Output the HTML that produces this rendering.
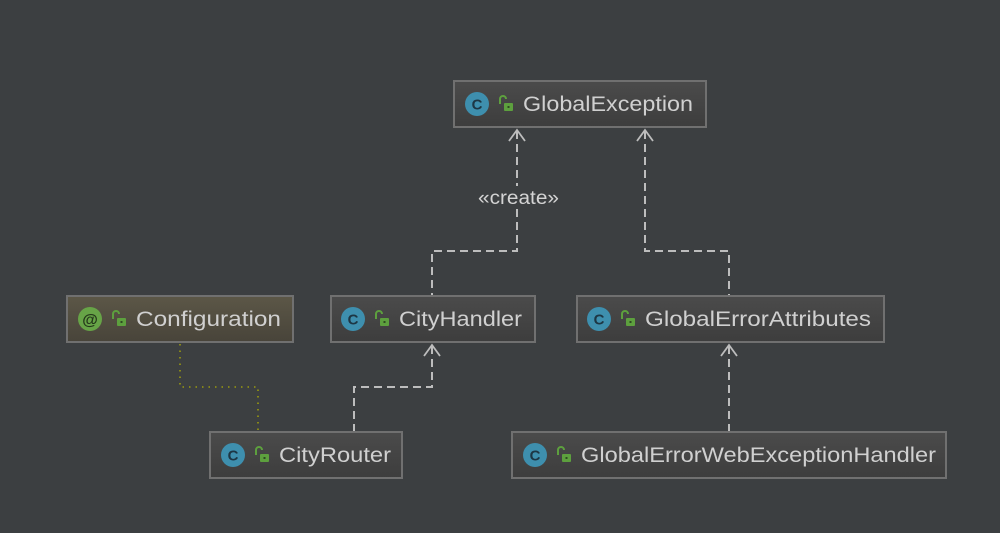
<!DOCTYPE html><html><head><style>body{margin:0;background:#3c3f41;}svg{display:block}text{font-family:"Liberation Sans",sans-serif;}</style></head><body>
<svg width="1000" height="533" viewBox="0 0 1000 533">
<defs>
<linearGradient id="g" x1="0" y1="0" x2="0" y2="1"><stop offset="0" stop-color="#4b4b4b"/><stop offset="1" stop-color="#3d3d3d"/></linearGradient>
<linearGradient id="y" x1="0" y1="0" x2="0" y2="1"><stop offset="0" stop-color="#5c5747"/><stop offset="1" stop-color="#48443a"/></linearGradient>
<g id="lock"><path d="M-5 0 v-5 a3 3 0 0 1 6 0" fill="none" stroke="#5da03e" stroke-width="2"/><rect x="-1" y="-1" width="9" height="8" rx="1" fill="#5da03e"/><rect x="2.5" y="2" width="2" height="2" fill="#2e4a22"/></g>
<g id="c"><circle r="12" fill="#3e8fae"/><text x="0" y="5.5" text-anchor="middle" font-size="15" font-weight="bold" fill="#1d3644">C</text></g>
</defs>
<g fill="none" stroke="#bdbdbd" stroke-width="2" stroke-dasharray="8,5">
<path d="M517 131 V251 H432 V295"/>
<path d="M645 131 V251 H729 V295"/>
<path d="M432 346 V387 H354 V431"/>
<path d="M729 346 V431"/>
</g>
<g fill="none" stroke="#bdbdbd" stroke-width="1.8">
<path d="M509 141 L517 130 L525 141"/><path d="M637 141 L645 130 L653 141"/>
<path d="M424 356 L432 345 L440 356"/><path d="M721 356 L729 345 L737 356"/>
</g>
<path d="M180 344 V387 H258 V431" fill="none" stroke="#9a9a10" stroke-width="1.6" stroke-dasharray="1.5,5"/>
<rect x="475" y="186" width="88" height="22" fill="#3c3f41"/>
<text x="478" y="204" font-size="19" fill="#d4d4d4" textLength="81" lengthAdjust="spacingAndGlyphs">«create»</text>
<g stroke="#707070" stroke-width="2">
<rect x="454" y="81" width="252" height="46" fill="url(#g)"/>
<rect x="67" y="296" width="226" height="46" fill="url(#y)"/>
<rect x="331" y="296" width="204" height="46" fill="url(#g)"/>
<rect x="577" y="296" width="307" height="46" fill="url(#g)"/>
<rect x="210" y="432" width="192" height="46" fill="url(#g)"/>
<rect x="512" y="432" width="434" height="46" fill="url(#g)"/>
</g>
<g font-size="21" fill="#d0d0d0">
<use href="#c" x="477" y="104"/><use href="#lock" x="505" y="104"/><text x="523" y="111" textLength="170" lengthAdjust="spacingAndGlyphs">GlobalException</text>
<circle cx="90" cy="319" r="12" fill="#67a447"/><text x="90" y="325" text-anchor="middle" font-size="16" font-weight="bold" fill="#24381a">@</text><use href="#lock" x="118" y="319"/><text x="136" y="326" textLength="145" lengthAdjust="spacingAndGlyphs">Configuration</text>
<use href="#c" x="353" y="319"/><use href="#lock" x="381" y="319"/><text x="399" y="326" textLength="123" lengthAdjust="spacingAndGlyphs">CityHandler</text>
<use href="#c" x="599" y="319"/><use href="#lock" x="627" y="319"/><text x="645" y="326" textLength="226" lengthAdjust="spacingAndGlyphs">GlobalErrorAttributes</text>
<use href="#c" x="233" y="455"/><use href="#lock" x="261" y="455"/><text x="279" y="462" textLength="112" lengthAdjust="spacingAndGlyphs">CityRouter</text>
<use href="#c" x="535" y="455"/><use href="#lock" x="563" y="455"/><text x="581" y="462" textLength="355" lengthAdjust="spacingAndGlyphs">GlobalErrorWebExceptionHandler</text>
</g>
</svg></body></html>
